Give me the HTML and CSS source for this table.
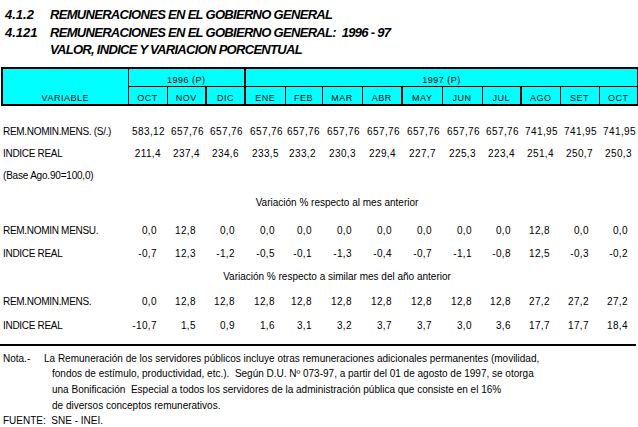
FILE: index.html
```html
<!DOCTYPE html>
<html lang="es">
<head>
<meta charset="utf-8">
<title>Remuneraciones en el Gobierno General</title>
<link rel="stylesheet" href="styles.css">
</head>
<body>
<div class="page">
  <div class="titles">
    <div class="tnum">4.1.2</div><div class="ttext">REMUNERACIONES EN EL GOBIERNO GENERAL</div>
    <div class="tnum">4.121</div><div class="ttext">REMUNERACIONES EN EL GOBIERNO GENERAL:&nbsp; 1996 - 97</div>
    <div class="tnum"></div><div class="ttext">VALOR, INDICE Y VARIACION PORCENTUAL</div>
  </div>

  <table class="head">
    <colgroup>
      <col class="c-var"><col class="c39"><col class="c39"><col class="c39"><col class="c40"><col class="c37"><col class="c40"><col class="c40"><col class="c40"><col class="c40"><col class="c39"><col class="c39"><col class="c39"><col class="c39">
    </colgroup>
    <tr class="yr">
      <td class="varcell" rowspan="2">VARIABLE</td>
      <td colspan="3" class="year">1996 (P)</td>
      <td colspan="10" class="year thickl">1997 (P)</td>
    </tr>
    <tr class="mo">
      <td>OCT</td><td>NOV</td><td class="thickl">DIC</td>
      <td class="thickl">ENE</td><td>FEB</td><td>MAR</td><td>ABR</td>
      <td class="thickl">MAY</td><td>JUN</td><td>JUL</td>
      <td class="thickl">AGO</td><td>SET</td><td>OCT</td>
    </tr>
  </table>

  <table class="data">
    <colgroup>
      <col class="c-var"><col class="c39"><col class="c39"><col class="c39"><col class="c40"><col class="c37"><col class="c40"><col class="c40"><col class="c40"><col class="c40"><col class="c39"><col class="c39"><col class="c39"><col class="c39">
    </colgroup>
    <tr class="h23 r-val">
      <td class="lbl">REM.NOMIN.MENS. (S/.)</td>
      <td>583,12</td><td>657,76</td><td>657,76</td><td>657,76</td><td>657,76</td><td>657,76</td><td>657,76</td><td>657,76</td><td>657,76</td><td>657,76</td><td>741,95</td><td>741,95</td><td>741,95</td>
    </tr>
    <tr class="h22 r-idx">
      <td class="lbl">INDICE REAL</td>
      <td>211,4</td><td>237,4</td><td>234,6</td><td>233,5</td><td>233,2</td><td>230,3</td><td>229,4</td><td>227,7</td><td>225,3</td><td>223,4</td><td>251,4</td><td>250,7</td><td>250,3</td>
    </tr>
    <tr class="h22">
      <td class="lbl base" colspan="14">(Base Ago.90=100,0)</td>
    </tr>
    <tr class="h32">
      <td class="sub" colspan="14">Variación % respecto al mes anterior</td>
    </tr>
    <tr class="h24 r-var">
      <td class="lbl">REM.NOMIN MENSU.</td>
      <td>0,0</td><td>12,8</td><td>0,0</td><td>0,0</td><td>0,0</td><td>0,0</td><td>0,0</td><td>0,0</td><td>0,0</td><td>0,0</td><td>12,8</td><td>0,0</td><td>0,0</td>
    </tr>
    <tr class="h22 r-var">
      <td class="lbl">INDICE REAL</td>
      <td>-0,7</td><td>12,3</td><td>-1,2</td><td>-0,5</td><td>-0,1</td><td>-1,3</td><td>-0,4</td><td>-0,7</td><td>-1,1</td><td>-0,8</td><td>12,5</td><td>-0,3</td><td>-0,2</td>
    </tr>
    <tr class="h24">
      <td class="sub" colspan="14">Variación % respecto a similar mes del año anterior</td>
    </tr>
    <tr class="h25 r-var">
      <td class="lbl">REM.NOMIN.MENS.</td>
      <td>0,0</td><td>12,8</td><td>12,8</td><td>12,8</td><td>12,8</td><td>12,8</td><td>12,8</td><td>12,8</td><td>12,8</td><td>12,8</td><td>27,2</td><td>27,2</td><td>27,2</td>
    </tr>
    <tr class="h24 r-var">
      <td class="lbl">INDICE REAL</td>
      <td>-10,7</td><td>1,5</td><td>0,9</td><td>1,6</td><td>3,1</td><td>3,2</td><td>3,7</td><td>3,7</td><td>3,0</td><td>3,6</td><td>17,7</td><td>17,7</td><td>18,4</td>
    </tr>
  </table>

  <div class="rule"></div>

  <div class="notes">
    <div class="nlabel">Nota.-</div>
    <div class="ntext">
      <div class="l1">La Remuneración de los servidores públicos incluye otras remuneraciones adicionales permanentes (movilidad,</div>
      <div class="ln">fondos de estímulo, productividad, etc.).&nbsp; Según D.U. Nº 073-97, a partir del 01 de agosto de 1997, se otorga</div>
      <div class="ln">una Bonificación&nbsp; Especial a todos los servidores de la administración pública que consiste en el 16%</div>
      <div class="ln">de diversos conceptos remunerativos.</div>
    </div>
  </div>
  <div class="source">FUENTE:&nbsp; SNE - INEI.</div>
</div>
</body>
</html>
```

FILE: styles.css
```css
html, body {
  margin: 0;
  padding: 0;
  background: #ffffff;
}

.page {
  width: 638px;
  font-family: "Liberation Sans", Arial, sans-serif;
  color: #000000;
}

.titles {
  display: grid;
  grid-template-columns: 45px auto;
  padding: 6px 0 0 5px;
  font-weight: bold;
  font-style: italic;
  font-size: 13px;
  line-height: 17.5px;
  letter-spacing: -0.7px;
}

.tnum {
  letter-spacing: 0;
}

.head {
  margin: 8px 0 0 1px;
  table-layout: fixed;
  width: 636px;
  border-collapse: collapse;
  background: #00ffff;
  border: 2px solid #000;
  font-size: 9px;
  letter-spacing: 0.5px;
}

.c-var { width: 126px; }
.c39 { width: 39px; }
.c40 { width: 40px; }
.c37 { width: 37px; }

.head td {
  border: 1px solid #000;
  padding: 0 0 1px 0;
  text-align: center;
  vertical-align: bottom;
  line-height: 10px;
}

.head .yr td { height: 16px; }
.head .mo td { height: 16px; }

.head .varcell {
  border-top: 2px solid #000;
  border-left: 2px solid #000;
  border-bottom: 2px solid #000;
}

.head .yr td { border-top: 2px solid #000; }
.head .mo td { border-bottom: 2px solid #000; }
.head td:last-child { border-right: 2px solid #000; }
.head .thickl { border-left: 2px solid #000; }

.data {
  margin-left: 1px;
  margin-top: 14px;
  table-layout: fixed;
  width: 636px;
  border-collapse: collapse;
  font-size: 10px;
}

.data td {
  padding: 0;
  text-align: right;
  white-space: nowrap;
  letter-spacing: 0.4px;
}

.data .lbl {
  text-align: left;
  padding-left: 2px;
  letter-spacing: -0.3px;
}

.data .base { letter-spacing: -0.2px; }

.data .sub {
  text-align: center;
  padding-left: 36px;
  letter-spacing: 0;
}

.r-val td { padding-right: 1px; }
.r-idx td { padding-right: 5px; }
.r-var td { padding-right: 9px; }

.h22 { height: 22px; }
.h23 { height: 23px; }
.h24 { height: 24px; }
.h25 { height: 25px; }
.h32 { height: 32px; }

.rule {
  height: 2px;
  background: #000;
  margin-top: 6px;
  width: 636px;
}

.notes {
  display: flex;
  margin-top: 5px;
  font-size: 10px;
  line-height: 15.7px;
}

.nlabel {
  width: 41px;
  padding-left: 3px;
}

.ln { padding-left: 8px; }

.source {
  padding-left: 3px;
  font-size: 10px;
  line-height: 15.7px;
}
```
